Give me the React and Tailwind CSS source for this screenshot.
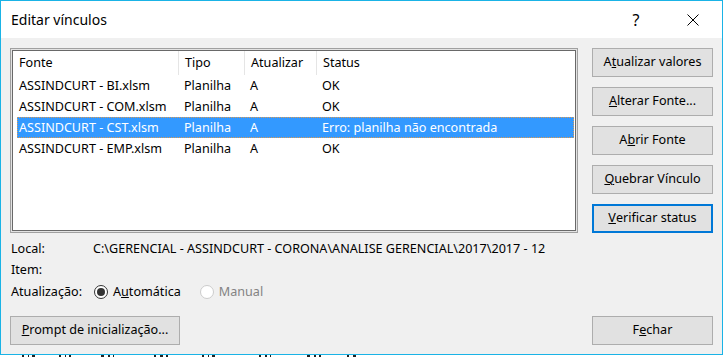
import React from 'react';

const rows = [
  { fonte: 'ASSINDCURT - BI.xlsm', tipo: 'Planilha', atualizar: 'A', status: 'OK' },
  { fonte: 'ASSINDCURT - COM.xlsm', tipo: 'Planilha', atualizar: 'A', status: 'OK' },
  { fonte: 'ASSINDCURT - CST.xlsm', tipo: 'Planilha', atualizar: 'A', status: 'Erro: planilha não encontrada', selected: true },
  { fonte: 'ASSINDCURT - EMP.xlsm', tipo: 'Planilha', atualizar: 'A', status: 'OK' },
];

// pedaços do que aparece atrás da janela
const marks = [
  [22, 2], [4, 1], [3, 3], [24, 2], [4, 1], [3, 2], [30, 3], [4, 2], [3, 1], [40, 2], [4, 3], [3, 2],
  [34, 2], [4, 1], [3, 3], [44, 2], [4, 2], [3, 1], [36, 3], [4, 2], [3, 2], [26, 2], [4, 3],
];

function WinButton({ children, focused, className = '' }) {
  return (
    <button
      className={
        'h-[29px] bg-[#e1e1e1] text-[12.6px] text-black flex items-center justify-center ' +
        (focused ? 'border-2 border-[#0078d7] ' : 'border border-[#adadad] ') +
        className
      }
    >
      {children}
    </button>
  );
}

function Key({ children }) {
  return <span className="underline underline-offset-[1px] decoration-1">{children}</span>;
}

export default function App() {
  return (
    <div className="w-[725px] h-[358px] bg-white overflow-hidden font-['Noto_Sans','Segoe_UI',sans-serif] text-black">
      <div className="w-[723px] h-[355px] border border-[#1ab3e6] flex flex-col">
        {/* Title bar */}
        <div className="h-[37px] bg-white flex items-center pl-[10px] shrink-0">
          <span className="text-[14px] leading-none">Editar vínculos</span>
          <div className="ml-auto flex items-center gap-[11px] pr-[6px]">
            <div className="w-[46px] flex justify-center text-[16px] leading-none">?</div>
            <div className="w-[46px] flex justify-center">
              <svg width="12" height="12" viewBox="0 0 12 12">
                <path d="M0.5 0.5 L11.5 11.5 M11.5 0.5 L0.5 11.5" stroke="#000" strokeWidth="1" fill="none" />
              </svg>
            </div>
          </div>
        </div>

        {/* Body */}
        <div className="flex-1 bg-[#f0f0f0] pt-[10px] px-[9px] pb-[9px] flex flex-col text-[12.6px]">
          <div className="flex gap-[14px] h-[185px]">
            {/* List */}
            <div className="w-[568px] h-full border border-[#a0a0a0] bg-[#e3e3e3] p-px">
              <div className="w-full h-full border border-[#696969] bg-white flex flex-col">
                <div className="h-[24px] grid grid-cols-[166px_66px_72px_1fr] items-center">
                  <div className="h-full flex items-center pl-[6px] border-r border-[#e5e5e5]">Fonte</div>
                  <div className="h-full flex items-center pl-[6px] border-r border-[#e5e5e5]">Tipo</div>
                  <div className="h-full flex items-center pl-[6px] border-r border-[#e5e5e5]">Atualizar</div>
                  <div className="h-full flex items-center pl-[6px]">Status</div>
                </div>
                {rows.map((r) => (
                  <div
                    key={r.fonte}
                    className={
                      'h-[21px] ml-[4px] mr-px grid grid-cols-[159px_66px_72px_1fr] items-center border ' +
                      (r.selected
                        ? 'bg-[#3399ff] text-white border-dotted border-[#d99a55]'
                        : 'border-transparent')
                    }
                  >
                    <div className="pl-px pt-px whitespace-nowrap">{r.fonte}</div>
                    <div className="pl-[7px] pt-px">{r.tipo}</div>
                    <div className="pl-[7px] pt-px">{r.atualizar}</div>
                    <div className="pl-[7px] pt-px whitespace-nowrap">{r.status}</div>
                  </div>
                ))}
              </div>
            </div>

            {/* Right buttons */}
            <div className="w-[121px] flex flex-col gap-[10px]">
              <WinButton>A<Key>t</Key>ualizar valores</WinButton>
              <WinButton><Key>A</Key>lterar Fonte...</WinButton>
              <WinButton>A<Key>b</Key>rir Fonte</WinButton>
              <WinButton><Key>Q</Key>uebrar Vínculo</WinButton>
              <WinButton focused><Key>V</Key>erificar status</WinButton>
            </div>
          </div>

          {/* Info */}
          <div className="mt-[6px] h-[21px] flex items-center">
            <span className="w-[83px] pl-px">Local:</span>
            <span className="whitespace-nowrap">C:\GERENCIAL - ASSINDCURT - CORONA\ANALISE GERENCIAL\2017\2017 - 12</span>
          </div>
          <div className="h-[21px] flex items-center">
            <span className="pl-px">Item:</span>
          </div>
          <div className="h-[23px] flex items-center">
            <span className="w-[84px] pl-px">Atualização:</span>
            <div className="flex items-center gap-[5px]">
              <span className="w-[14px] h-[14px] rounded-full border border-[#333] bg-white flex items-center justify-center">
                <span className="w-[8px] h-[8px] rounded-full bg-[#333]"></span>
              </span>
              <span>A<Key>u</Key>tomática</span>
            </div>
            <div className="flex items-center gap-[5px] ml-[19px] text-[#838383]">
              <span className="w-[14px] h-[14px] rounded-full border border-[#cccccc] bg-white"></span>
              <span>Manual</span>
            </div>
          </div>

          {/* Bottom buttons */}
          <div className="mt-[12px] flex justify-between">
            <WinButton className="w-[170px]"><Key>P</Key>rompt de inicialização...</WinButton>
            <WinButton className="w-[121px]">F<Key>e</Key>char</WinButton>
          </div>
        </div>
      </div>
      <div className="h-[3px] flex items-start">
        {marks.map(([gap, w], i) => (
          <div key={i} className="flex shrink-0">
            <div style={{ width: gap }}></div>
            <div className="h-[2px] bg-[#222]" style={{ width: w }}></div>
          </div>
        ))}
      </div>
    </div>
  );
}
